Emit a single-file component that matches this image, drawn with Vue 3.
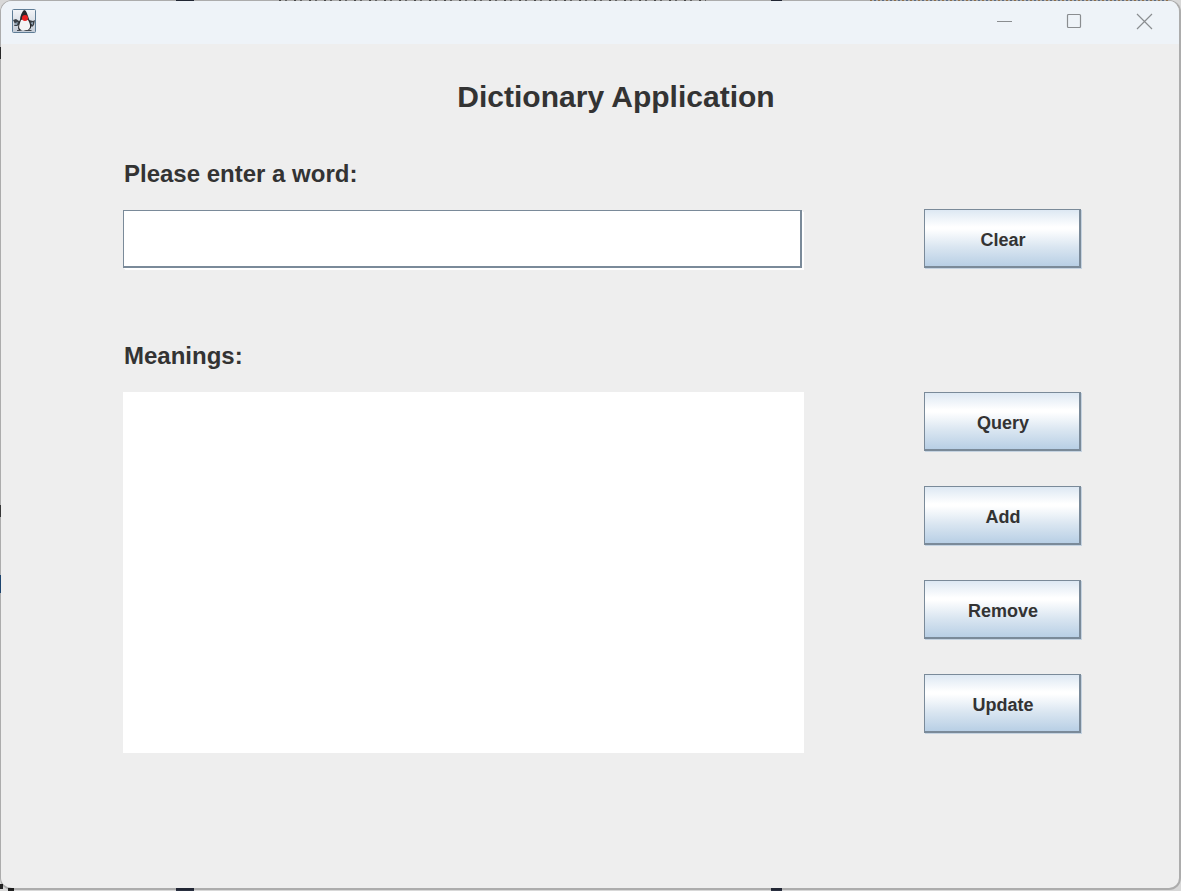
<script setup>
import { ref } from 'vue'

const word = ref('')
const meanings = ref('')
const actions = ['Query', 'Add', 'Remove', 'Update']

function clear() {
  word.value = ''
  meanings.value = ''
}
</script>

<template>
  <div class="desktop">
    <div class="window">
      <header class="titlebar">
        <svg class="app-icon" viewBox="0 0 24 24" aria-hidden="true">
          <defs>
            <linearGradient id="tile" x1="0" y1="0" x2="0" y2="1">
              <stop offset="0" stop-color="#f3f5f8" />
              <stop offset="1" stop-color="#c3cbd6" />
            </linearGradient>
          </defs>
          <rect x=".5" y=".5" width="23" height="23" rx="1" fill="url(#tile)" stroke="#5f7d96" />
          <path d="M1 11l3-1 3 2 2-1v4l-4 2H2l1-2zM23 11l-2 1-4-1-2 1v3l3 1 2 2 2-2z" fill="#3a4046" />
          <path d="M3 14l3-1-1 3H3zM18 14l3-1v3z" fill="#8fa0b0" />
          <path d="M12 1c2 0 3 3 4 6 1 4 4 8 3 12l-2 2H7c-2-2 0-6 1-10 0-4 2-8 4-10z" fill="#26282b" />
          <path d="M9 11c2-1 5-1 7 0 2 3 3 7 1 9-2 2-7 2-9 0-2-2 0-6 1-9z" fill="#f4f4f4" />
          <path d="M5 21h3l3 1 3-1h5l1 1H5z" fill="#45494e" />
          <circle cx="13" cy="9" r="3" fill="#ea2020" />
        </svg>
        <div class="controls">
          <button type="button" aria-label="Minimize">
            <svg viewBox="0 0 16 16"><path d="M1 8.500h15" /></svg>
          </button>
          <button type="button" aria-label="Maximize">
            <svg viewBox="0 0 16 16"><rect x="1.500" y="1.500" width="13" height="13" rx="1" /></svg>
          </button>
          <button type="button" aria-label="Close">
            <svg viewBox="0 0 16 16"><path d="M1 1l15 15M16 1l-15 15" /></svg>
          </button>
        </div>
      </header>
      <main>
        <h1>Dictionary Application</h1>
        <section class="entry">
          <label for="word">Please enter a word:</label>
          <div class="field">
            <input id="word" v-model="word" type="text" />
          </div>
          <button class="metal" type="button" @click="clear">Clear</button>
        </section>
        <section class="result">
          <label for="meanings">Meanings:</label>
          <textarea id="meanings" v-model="meanings"></textarea>
          <div class="actions">
            <button v-for="name in actions" :key="name" class="metal" type="button">{{ name }}</button>
          </div>
        </section>
      </main>
    </div>
  </div>
</template>

<style>
body {
  background: #d8d8d8;
}
</style>

<style scoped>
.desktop {
  min-height: 100vh;
  box-sizing: border-box;
  padding-bottom: 1px;
  display: flex;
  font-family: "Liberation Sans", Arial, sans-serif;
  color: #333;
  background:
    linear-gradient(#2a3040, #2a3040) 176px 0 / 18px 100% no-repeat,
    linear-gradient(#2a3040, #2a3040) 771px 0 / 11px 100% no-repeat,
    repeating-linear-gradient(90deg, #555 0 2px, #d8d8d8 2px 6px, #777 6px 8px, #d8d8d8 8px 15px) 279px 0 / 427px 1px no-repeat,
    repeating-linear-gradient(90deg, #b48a58 0 2px, #d8d8d8 2px 4px, #6d86a8 4px 6px, #d8d8d8 6px 8px) 870px 0 / 300px 1px no-repeat,
    linear-gradient(#333, #333) 0 47px / 1px 12px no-repeat,
    linear-gradient(#444, #444) 0 505px / 1px 12px no-repeat,
    linear-gradient(#24568a, #24568a) 0 575px / 1px 18px no-repeat,
    linear-gradient(#222, #222) 0 884px / 3px 5px no-repeat,
    linear-gradient(#222, #222) 8px 100% / 6px 3px no-repeat,
    #d8d8d8;
}
.window {
  flex: 1;
  box-sizing: border-box;
  border: 1px solid rgba(0, 0, 0, .2);
  border-right-width: 2px;
  border-bottom-width: 2px;
  border-radius: 12px;
  overflow: hidden;
  background: #eee;
  background-clip: padding-box;
}
.titlebar {
  height: 43px;
  display: flex;
  justify-content: space-between;
  background: #eef3f8;
}
.app-icon {
  width: 24px;
  height: 24px;
  margin: 8px 0 0 11px;
}
.controls {
  display: flex;
}
.controls button {
  width: 70px;
  height: 40px;
  padding: 0;
  border: 0;
  background: none;
  display: flex;
  align-items: center;
  justify-content: center;
}
.controls svg {
  width: 16px;
  height: 16px;
  fill: none;
  stroke: #8a8d90;
  stroke-width: 1.2;
  overflow: visible;
}
main {
  padding: 33px 98px 0 122px;
}
h1 {
  margin: 0;
  padding-left: 28px;
  font-size: 30px;
  line-height: 40px;
  text-align: center;
}
section {
  display: grid;
  grid-template-columns: 1fr 157px;
  column-gap: 120px;
}
.entry {
  margin-top: 42px;
}
.result {
  margin-top: 73px;
}
label {
  grid-column: 1 / -1;
  padding-left: 1px;
  font-size: 24px;
  font-weight: bold;
  line-height: 30px;
}
input,
textarea {
  box-sizing: border-box;
  width: 100%;
  margin: 0;
  padding: 8px;
  border: 0;
  border-radius: 0;
  outline: 0;
  background: #fff;
  color: #333;
  font-family: inherit;
  font-size: 24px;
}
.field {
  display: flex;
  margin-top: 21px;
  padding: 0 2px 0 0;
}
input {
  height: 58px;
  border: 1px solid #7a8a99;
  border-right-width: 2px;
  border-bottom-width: 2px;
  box-shadow: 1px 1px #fff, 2px 2px #fff;
}
textarea {
  height: 361px;
  margin-top: 21px;
  resize: none;
}
.metal {
  box-sizing: border-box;
  width: 157px;
  height: 59px;
  padding: 5px 0 0 2px;
  border: 1px solid #7a8a99;
  border-right-width: 2px;
  border-bottom-width: 2px;
  border-radius: 0;
  background: linear-gradient(#dde8f3, #fff 30%, #fff 34%, #dae6f1 66%, #b8cfe5);
  box-shadow: 1px 1px #c5d3e1;
  color: #333;
  font-family: inherit;
  font-size: 18px;
  font-weight: bold;
}
.entry .metal {
  margin-top: 20px;
}
.actions {
  display: flex;
  flex-direction: column;
  gap: 35px;
  margin-top: 21px;
}
</style>
